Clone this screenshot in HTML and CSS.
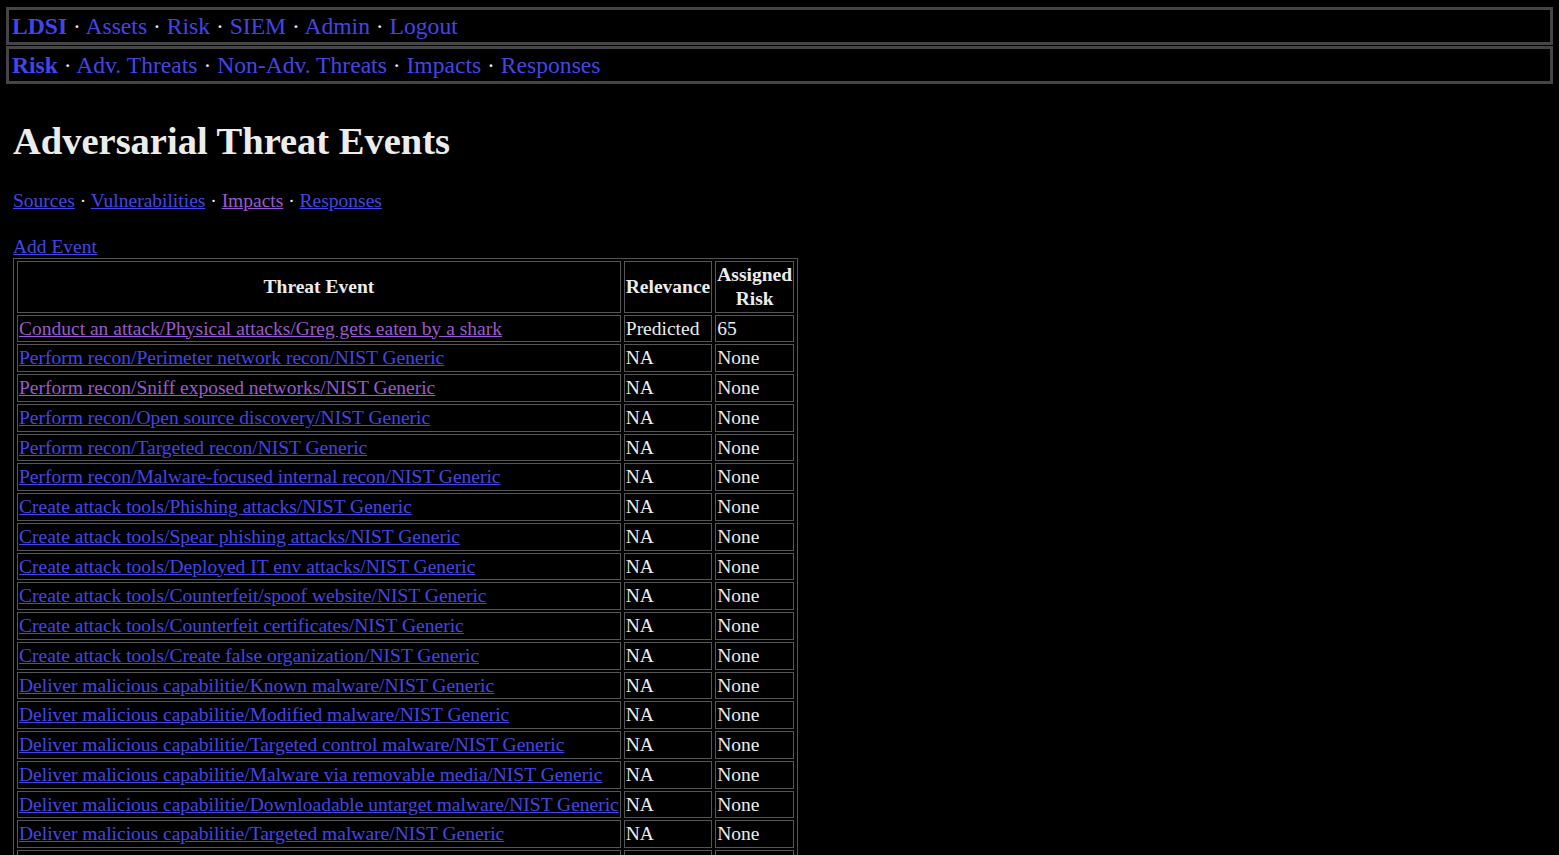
FILE: index.html
```html
<!DOCTYPE html>
<html>
<head>
<meta charset="utf-8">
<title>Adversarial Threat Events</title>
<link rel="stylesheet" href="styles.css">
</head>
<body>
<nav class="topnav">
  <div class="navrow"><a class="brand" href="#">LDSI</a> · <a href="#">Assets</a> · <a href="#">Risk</a> · <a href="#">SIEM</a> · <a href="#">Admin</a> · <a href="#">Logout</a></div>
  <div class="navrow"><a class="brand" href="#">Risk</a> · <a href="#">Adv. Threats</a> · <a href="#">Non-Adv. Threats</a> · <a href="#">Impacts</a> · <a href="#">Responses</a></div>
</nav>
<main class="content">
  <h1 class="title">Adversarial Threat Events</h1>
  <p class="sublinks"><a class="ul" href="#">Sources</a> · <a class="ul" href="#">Vulnerabilities</a> · <a class="ul visited" href="#">Impacts</a> · <a class="ul" href="#">Responses</a></p>
  <div class="addrow"><a class="ul" href="#">Add Event</a></div>
  <table class="events">
    <tr><th>Threat Event</th><th>Relevance</th><th>Assigned<br>Risk</th></tr>
    <tr><td><a class="ul visited" href="#">Conduct an attack/Physical attacks/Greg gets eaten by a shark</a></td><td>Predicted</td><td>65</td></tr>
    <tr><td><a class="ul" href="#">Perform recon/Perimeter network recon/NIST Generic</a></td><td>NA</td><td>None</td></tr>
    <tr><td><a class="ul visited" href="#">Perform recon/Sniff exposed networks/NIST Generic</a></td><td>NA</td><td>None</td></tr>
    <tr><td><a class="ul" href="#">Perform recon/Open source discovery/NIST Generic</a></td><td>NA</td><td>None</td></tr>
    <tr><td><a class="ul" href="#">Perform recon/Targeted recon/NIST Generic</a></td><td>NA</td><td>None</td></tr>
    <tr><td><a class="ul" href="#">Perform recon/Malware-focused internal recon/NIST Generic</a></td><td>NA</td><td>None</td></tr>
    <tr><td><a class="ul" href="#">Create attack tools/Phishing attacks/NIST Generic</a></td><td>NA</td><td>None</td></tr>
    <tr><td><a class="ul" href="#">Create attack tools/Spear phishing attacks/NIST Generic</a></td><td>NA</td><td>None</td></tr>
    <tr><td><a class="ul" href="#">Create attack tools/Deployed IT env attacks/NIST Generic</a></td><td>NA</td><td>None</td></tr>
    <tr><td><a class="ul" href="#">Create attack tools/Counterfeit/spoof website/NIST Generic</a></td><td>NA</td><td>None</td></tr>
    <tr><td><a class="ul" href="#">Create attack tools/Counterfeit certificates/NIST Generic</a></td><td>NA</td><td>None</td></tr>
    <tr><td><a class="ul" href="#">Create attack tools/Create false organization/NIST Generic</a></td><td>NA</td><td>None</td></tr>
    <tr><td><a class="ul" href="#">Deliver malicious capabilitie/Known malware/NIST Generic</a></td><td>NA</td><td>None</td></tr>
    <tr><td><a class="ul" href="#">Deliver malicious capabilitie/Modified malware/NIST Generic</a></td><td>NA</td><td>None</td></tr>
    <tr><td><a class="ul" href="#">Deliver malicious capabilitie/Targeted control malware/NIST Generic</a></td><td>NA</td><td>None</td></tr>
    <tr><td><a class="ul" href="#">Deliver malicious capabilitie/Malware via removable media/NIST Generic</a></td><td>NA</td><td>None</td></tr>
    <tr><td><a class="ul" href="#">Deliver malicious capabilitie/Downloadable untarget malware/NIST Generic</a></td><td>NA</td><td>None</td></tr>
    <tr><td><a class="ul" href="#">Deliver malicious capabilitie/Targeted malware/NIST Generic</a></td><td>NA</td><td>None</td></tr>
    <tr><td><a class="ul" href="#">Deliver malicious capabilitie/Web traffic malware/NIST Generic</a></td><td>NA</td><td>None</td></tr>
  </table>
</main>
</body>
</html>
```

FILE: styles.css
```css
html, body {
  background: #000;
}
body {
  margin: 0;
  color: #ececec;
  font-family: "Liberation Serif", "Times New Roman", serif;
  font-size: 19.5px;
}
a {
  color: #4545e6;
  text-decoration: none;
}
a.ul {
  text-decoration: underline;
}
a.visited {
  color: #9b59d0;
}
.topnav {
  margin: 7px 6px 0 6px;
}
.navrow {
  border: 3px solid #454545;
  padding: 3px 3px 3px 3px;
  font-size: 23.6px;
  line-height: 26px;
  height: 26px;
  margin-bottom: 1px;
}
.brand {
  font-weight: bold;
}
.content {
  padding: 0 13px;
}
.title {
  font-size: 38.5px;
  margin: 35px 0 0 0;
  line-height: 44px;
}
.sublinks {
  margin: 26px 0 0 0;
  line-height: 23px;
}
.addrow {
  margin-top: 23px;
  line-height: 23px;
}
.events {
  border: 1px solid #555;
  border-spacing: 3px 2px;
  margin-left: 0;
}
.events th, .events td {
  border: 1px solid #555;
  padding: 1px;
  line-height: 23.75px;
}
.events td {
  text-align: left;
}
.events th {
  text-align: center;
}
```
